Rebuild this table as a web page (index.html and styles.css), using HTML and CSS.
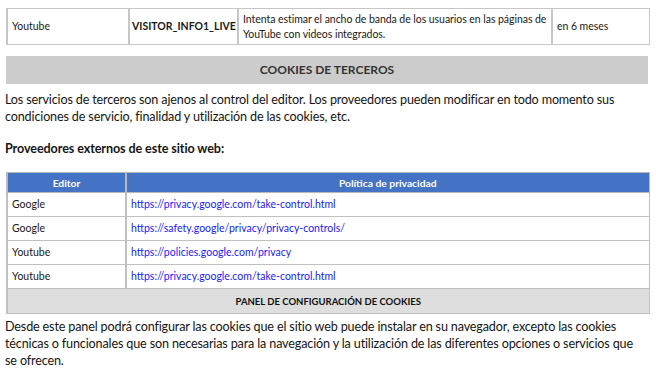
FILE: index.html
```html
<!DOCTYPE html>
<html lang="es">
<head>
<meta charset="utf-8">
<title>Cookies de terceros</title>
<link rel="stylesheet" href="styles.css">
</head>
<body>
<div class="page">
  <table class="cookie-table">
    <colgroup>
      <col class="c1"><col class="c2"><col class="c3"><col class="c4">
    </colgroup>
    <tr>
      <td>Youtube</td>
      <td class="name">VISITOR_INFO1_LIVE</td>
      <td>Intenta estimar el ancho de banda de los usuarios en las páginas de YouTube con videos integrados.</td>
      <td>en 6 meses</td>
    </tr>
  </table>

  <div class="section-bar">COOKIES DE TERCEROS</div>

  <p class="text">Los servicios de terceros son ajenos al control del editor. Los proveedores pueden modificar en todo momento sus condiciones de servicio, finalidad y utilización de las cookies, etc.</p>

  <p class="subhead">Proveedores externos de este sitio web:</p>

  <table class="providers">
    <colgroup><col class="p1"><col class="p2"></colgroup>
    <tr class="head"><th>Editor</th><th>Política de privacidad</th></tr>
    <tr><td>Google</td><td><a href="#">https://privacy.google.com/take-control.html</a></td></tr>
    <tr><td>Google</td><td><a href="#">https://safety.google/privacy/privacy-controls/</a></td></tr>
    <tr><td>Youtube</td><td><a href="#">https://policies.google.com/privacy</a></td></tr>
    <tr><td>Youtube</td><td><a href="#">https://privacy.google.com/take-control.html</a></td></tr>
    <tr class="panel"><td colspan="2">PANEL DE CONFIGURACIÓN DE COOKIES</td></tr>
  </table>

  <p class="text last">Desde este panel podrá configurar las cookies que el sitio web puede instalar en su navegador, excepto las cookies técnicas o funcionales que son necesarias para la navegación y la utilización de las diferentes opciones o servicios que se ofrecen.</p>
</div>
</body>
</html>
```

FILE: styles.css
```css
html, body {
  margin: 0;
  padding: 0;
  background: #ffffff;
}

body {
  font-family: "Lato", "Open Sans", "Liberation Sans", sans-serif;
  color: #151515;
}

.page {
  padding: 8px 8px 0 5px;
}

table {
  border-collapse: collapse;
  table-layout: fixed;
  margin-left: 1px;
}

.cookie-table {
  width: 642px;
  border: 1px solid #c6c6c6;
}

.cookie-table col.c1 { width: 122px; }
.cookie-table col.c2 { width: 109px; }
.cookie-table col.c3 { width: 314px; }
.cookie-table col.c4 { width: 97px; }

.cookie-table td {
  border: 1px solid #c6c6c6;
  border-left-width: 2px;
  height: 35px;
  padding: 0 2px 0 4px;
  font-size: 10.5px;
  line-height: 15px;
  letter-spacing: -0.05px;
  color: #1a1a1a;
  vertical-align: middle;
}

.cookie-table td.name {
  font-weight: 700;
  text-align: center;
  padding: 0 2px;
  letter-spacing: 0;
}

.section-bar {
  margin: 11px 0 0 1px;
  width: 642px;
  height: 28px;
  background: #cccccc;
  color: #333333;
  font-weight: 700;
  font-size: 12px;
  line-height: 28px;
  text-align: center;
}

.text {
  margin: 7px 0 0;
  max-width: 636px;
  font-size: 12.6px;
  letter-spacing: -0.15px;
  line-height: 17px;
  color: #151515;
}

.subhead {
  margin: 15px 0 0;
  font-size: 12.6px;
  letter-spacing: -0.1px;
  line-height: 17px;
  font-weight: 700;
}

.providers {
  margin-top: 15px;
  width: 642px;
  border: 1px solid #c6c6c6;
}

.providers col.p1 { width: 119px; }
.providers col.p2 { width: 523px; }

.providers th {
  background: #4472c4;
  color: #ffffff;
  font-size: 10.3px;
  font-weight: 700;
  line-height: 12px;
  height: 19px;
  padding: 0;
  text-align: center;
  border: 1px solid #b8b8b8;
  border-left-width: 2px;
}

.providers td {
  height: 23px;
  padding: 0 4px;
  font-size: 10.5px;
  line-height: 13px;
  color: #1a1a1a;
  border: 1px solid #c0c0c0;
  border-left-width: 2px;
  vertical-align: middle;
}

.providers a {
  color: #1a1aff;
  text-decoration: none;
}

.providers .panel td {
  height: 24px;
  background: #dedede;
  text-align: center;
  font-weight: 700;
  font-size: 9.5px;
  color: #111111;
}

.text.last {
  margin-top: 4px;
}
```
